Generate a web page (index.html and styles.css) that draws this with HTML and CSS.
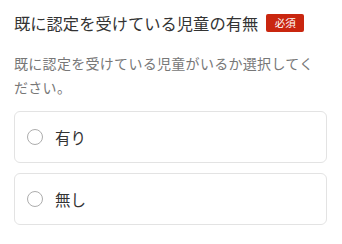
FILE: index.html
```html
<!DOCTYPE html>
<html lang="ja">
<head>
<meta charset="utf-8">
<link rel="stylesheet" href="styles.css">
</head>
<body>
<div class="field">
  <div class="title-row">
    <h2 class="title">既に認定を受けている児童の有無</h2>
    <span class="badge">必須</span>
  </div>
  <p class="desc">既に認定を受けている児童がいるか選択してください。</p>
  <div class="options">
    <label class="option"><span class="radio"></span><span class="label">有り</span></label>
    <label class="option"><span class="radio"></span><span class="label">無し</span></label>
  </div>
</div>
</body>
</html>
```
FILE: styles.css
```css
html, body {
  margin: 0;
  padding: 0;
  background: #ffffff;
}
body {
  font-family: "Noto Sans CJK JP", "Noto Sans", sans-serif;
  color: #333333;
}
.field {
  padding: 11px 15px 0 14px;
}
.title-row {
  display: flex;
  align-items: center;
  gap: 8px;
  height: 24px;
}
.title {
  margin: 0;
  font-size: 16.3px;
  font-weight: 400;
  line-height: 24px;
  color: #333333;
}
.badge {
  display: inline-block;
  background: #c9260f;
  color: #ffffff;
  font-size: 10.5px;
  line-height: 18px;
  height: 18px;
  padding: 0 8.5px;
  border-radius: 2px;
}
.desc {
  margin: 16px 0 0;
  font-size: 14px;
  letter-spacing: 0.3px;
  line-height: 24px;
  color: #777777;
}
.options {
  margin-top: 12px;
  display: flex;
  flex-direction: column;
  gap: 10px;
}
.option {
  display: flex;
  align-items: center;
  height: 50px;
  border: 1px solid #e3e3e3;
  border-radius: 6px;
  padding-left: 12px;
}
.radio {
  width: 14px;
  height: 14px;
  border: 1.5px solid #adadad;
  border-radius: 50%;
  box-sizing: content-box;
  flex: none;
}
.label {
  margin-left: 12px;
  font-size: 15.5px;
  color: #333333;
}
```
